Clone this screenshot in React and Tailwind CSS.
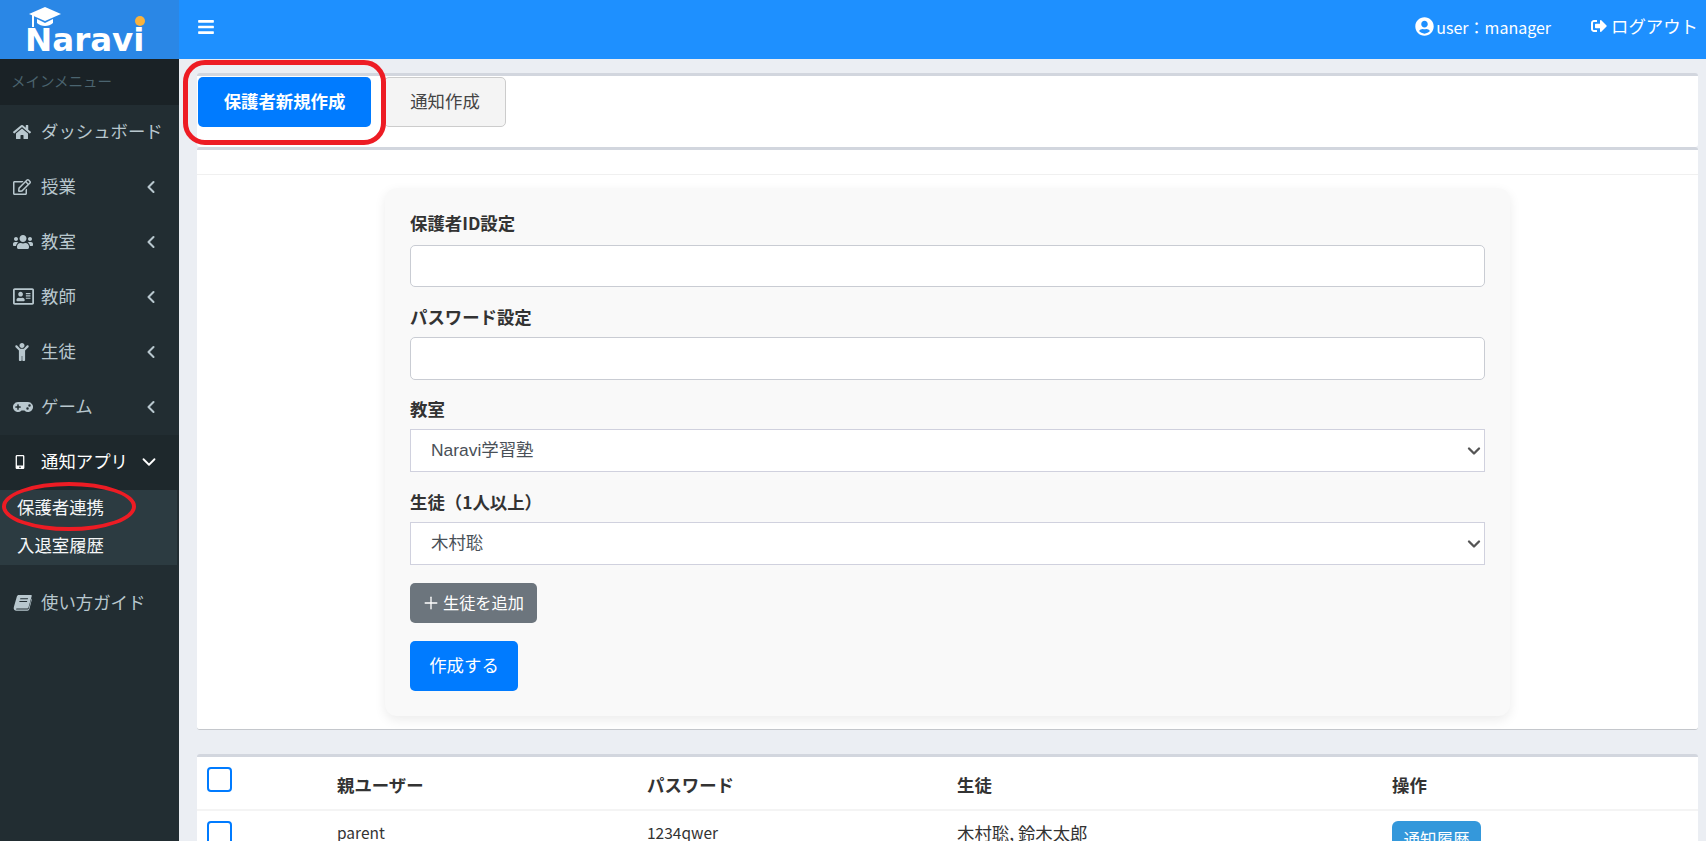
import React from 'react';
import {
  FaHome, FaRegEdit, FaUsers, FaRegAddressCard, FaChild, FaGamepad, FaMobileAlt,
  FaBars, FaUserCircle, FaSignOutAlt,
} from 'react-icons/fa';
import { ChevronLeft, ChevronDown, Plus } from 'lucide-react';

const font = "font-['Noto_Sans_CJK_JP','Noto_Sans',sans-serif]";

// slanted book, the package only has the upright one
function BookIcon({ size }) {
  return (
    <svg width={size} height={size} viewBox="0 0 18 18" fill="currentColor">
      <path d="M5.5 2 H17 C17.6 2 17.9 2.5 17.7 3.1 L14.8 13.2 C14.5 14.2 14 14.6 13 14.6 H3.6 C2.8 14.6 2.5 15.6 3.6 15.6 H13.6 C14.3 15.6 14.7 15.3 14.9 14.6 L17.6 5.2 L18 5.6 L15.6 15 C15.3 16.1 14.7 16.8 13.6 16.8 H3.4 C1.4 16.8 0.2 15.2 0.8 13.2 L3.6 3.6 C3.9 2.6 4.6 2 5.5 2 Z M7 5 L6.7 6 H14 L14.3 5 Z M6.2 7.6 L5.9 8.6 H13.2 L13.5 7.6 Z" fillRule="evenodd" />
    </svg>
  );
}

const menu = [
  { icon: FaHome, label: 'ダッシュボード', size: 18 },
  { icon: FaRegEdit, label: '授業', size: 18, arrow: true },
  { icon: FaUsers, label: '教室', size: 20, arrow: true },
  { icon: FaRegAddressCard, label: '教師', size: 21, arrow: true },
  { icon: FaChild, label: '生徒', size: 18, arrow: true },
  { icon: FaGamepad, label: 'ゲーム', size: 20, arrow: true },
];

function MenuItem({ icon: Icon, label, size, arrow }) {
  return (
    <div className="flex h-[55px] items-center pb-[2px] pl-[13px] pr-[18px] text-[#b8c7ce]">
      <span className="w-[28px] shrink-0"><Icon size={size} /></span>
      <span className="flex-1 whitespace-nowrap">{label}</span>
      {arrow && <ChevronLeft size={20} strokeWidth={2.5} />}
    </div>
  );
}

function Sidebar() {
  return (
    <aside className="relative w-[179px] shrink-0 bg-[#222d32] text-[17.4px]">
      <div className="flex h-[46px] items-center bg-[#1a2226] pb-[2px] pl-[11px] text-[14.5px] text-[#4b646f]">メインメニュー</div>
      {menu.map((m) => <MenuItem key={m.label} {...m} />)}
      <div className="flex h-[55px] items-center bg-[#1e282c] pb-[2px] pl-[13px] pr-[19px] text-white">
        <span className="w-[28px] shrink-0"><FaMobileAlt size={14} /></span>
        <span className="flex-1 whitespace-nowrap">通知アプリ</span>
        <ChevronDown size={22} strokeWidth={2} />
      </div>
      <div className="mr-[2px] bg-[#2c3b41] text-[#f4f6f7]">
        <div className="flex h-[37px] items-center pb-[2px] pl-[17px]">保護者連携</div>
        <div className="flex h-[38px] items-center pb-[2px] pl-[17px]">入退室履歴</div>
      </div>
      <div className="mt-[11px]">
        <MenuItem icon={BookIcon} size={19} label="使い方ガイド" />
      </div>
      {/* red annotation around the submenu entry */}
      <div className="absolute left-[2px] top-[423px] h-[49px] w-[134px] rounded-[50%] border-[4px] border-[#ed1c24]" />
    </aside>
  );
}

function Field({ label, children, className }) {
  return (
    <div className={className}>
      <label className="block h-[26px] text-[17.4px] font-bold leading-[24px] text-[#333]">{label}</label>
      {children}
    </div>
  );
}

function SelectBox({ value }) {
  return (
    <div className="relative mt-[6px]">
      <select className="block h-[43px] w-full appearance-none border border-[#d0d1de] bg-white pl-[20px] pr-[24px] font-['Liberation_Sans','Noto_Sans_CJK_JP',sans-serif] text-[17.4px] text-[#495057]">
        <option>{value}</option>
      </select>
      <ChevronDown size={20} strokeWidth={2.8} className="pointer-events-none absolute right-[1px] top-1/2 -translate-y-1/2 text-[#555]" />
    </div>
  );
}

export default function App() {
  return (
    <div className={`h-[856px] bg-white ${font}`}>
      <div className="flex h-[841px] flex-col overflow-hidden">
        <header className="flex h-[59px] shrink-0 items-center bg-[#1e90ff] text-white">
          <div className="relative h-[59px] w-[179px] shrink-0 bg-[#2a87e6]">
            <svg className="absolute left-[29px] top-[7px]" width="33" height="20" viewBox="0 0 33 20" fill="white">
              <path d="M16 0 L32 7 L16 14 L0 7 Z" />
              <path d="M8 12 L16 16 L24 12 L24 16 C20 20 12 20 8 16 Z" />
              <rect x="3" y="8" width="2" height="14" />
            </svg>
            <span className="absolute left-[25px] top-[18px] font-['DejaVu_Sans',sans-serif] text-[32.5px] font-bold leading-[44px]">Naravi</span>
            <span className="absolute left-[135px] top-[16px] h-[10px] w-[10px] rounded-full bg-[#f9b23c]" />
          </div>
          <button className="mb-[6px] ml-[18px]"><FaBars size={18} /></button>
          <div className="mb-[6px] ml-auto flex items-center gap-[2px] text-[16px]">
            <FaUserCircle size={19} />
            <span>user：manager</span>
          </div>
          <div className="mb-[6px] ml-[40px] mr-[8px] flex items-center gap-[4px] text-[17.4px]">
            <FaSignOutAlt size={16} />
            <span>ログアウト</span>
          </div>
        </header>

        <div className="flex min-h-0 flex-1">
          <Sidebar />
          <main className="relative min-w-0 flex-1 overflow-hidden bg-[#ebeef3] pl-[18px] pr-[8px] pt-[14px]">
            <section className="flex h-[74px] items-start rounded-[3px] border-t-[3px] border-[#d2d6de] bg-white pl-px pt-px">
              <button className="h-[50px] w-[173px] rounded-[5px] bg-[#007bff] pb-[1px] text-[17.4px] font-bold text-white">保護者新規作成</button>
              <button className="ml-[13px] h-[50px] w-[122px] rounded-[5px] border border-[#ccc] bg-[#f4f4f4] pb-[1px] text-[17.4px] text-[#444]">通知作成</button>
            </section>

            <section className="h-[583px] rounded-[3px] border-b border-t-[3px] border-[#d2d6de] border-b-[#c4c7cc] bg-white">
              <div className="h-[25px] border-b border-[#f0f0f0]" />
              <div className="mx-auto mt-[13px] h-[528px] w-[1125px] rounded-[12px] bg-[#f9f9f9] px-[25px] pt-[23px] shadow-[0_4px_12px_rgba(0,0,0,0.08)]">
                <Field label="保護者ID設定">
                  <input className="mt-[8px] block h-[42px] w-full rounded-[5px] border border-[#c9ccd3] bg-white" />
                </Field>
                <Field label="パスワード設定" className="mt-[18px]">
                  <input className="mt-[6px] block h-[43px] w-full rounded-[5px] border border-[#c9ccd3] bg-white" />
                </Field>
                <Field label="教室" className="mt-[17px]">
                  <SelectBox value="Naravi学習塾" />
                </Field>
                <Field label="生徒（1人以上）" className="mt-[18px]">
                  <SelectBox value="木村聡" />
                </Field>
                <button className="mt-[18px] flex h-[40px] w-[127px] items-center gap-[2px] rounded-[5px] bg-[#6c757d] pb-[1px] pl-[11px] text-[16.2px] text-white">
                  <Plus size={20} strokeWidth={1.6} />
                  <span>生徒を追加</span>
                </button>
                <button className="mt-[18px] block h-[50px] w-[108px] rounded-[5px] bg-[#007bff] pb-[2px] text-[17.4px] text-white">作成する</button>
              </div>
            </section>

            <section className="mt-[24px] rounded-[3px] border-t-[3px] border-[#d2d6de] bg-white">
              <table className="w-full table-fixed text-left text-[17.4px] text-[#333]">
                <thead>
                  <tr className="border-b-2 border-[#f4f4f4]">
                    <th className="w-[130px] pb-[17px] pl-[10px] pt-[10px] align-top"><span className="block h-[25px] w-[25px] rounded-[4px] border-2 border-[#007bff]" /></th>
                    <th className="w-[310px] pb-[11px] pl-[10px] pt-[15px] align-top font-bold">親ユーザー</th>
                    <th className="w-[310px] pb-[11px] pl-[10px] pt-[15px] align-top font-bold">パスワード</th>
                    <th className="w-[435px] pb-[11px] pl-[10px] pt-[15px] align-top font-bold">生徒</th>
                    <th className="pb-[11px] pl-[10px] pt-[15px] align-top font-bold">操作</th>
                  </tr>
                </thead>
                <tbody>
                  <tr className="text-[15.5px]">
                    <td className="pl-[10px] pt-[10px] align-top"><span className="block h-[25px] w-[25px] rounded-[4px] border-2 border-[#007bff]" /></td>
                    <td className="pl-[10px] pt-[8px] align-top leading-[26px]">parent</td>
                    <td className="pl-[10px] pt-[8px] align-top leading-[26px]">1234qwer</td>
                    <td className="pl-[10px] pt-[10px] align-top text-[17.4px] leading-[24px]">木村聡, 鈴木太郎</td>
                    <td className="pl-[10px] pt-[10px] align-top">
                      <button className="h-[36px] w-[89px] rounded-[6px] bg-[#3498db] text-[16.5px] text-white">通知履歴</button>
                    </td>
                  </tr>
                </tbody>
              </table>
            </section>

            {/* red annotation around the first tab */}
            <div className="absolute left-[4px] top-[1px] h-[85px] w-[203px] rounded-[22px] border-[5px] border-[#ed1c24]" />
          </main>
        </div>
      </div>
    </div>
  );
}
